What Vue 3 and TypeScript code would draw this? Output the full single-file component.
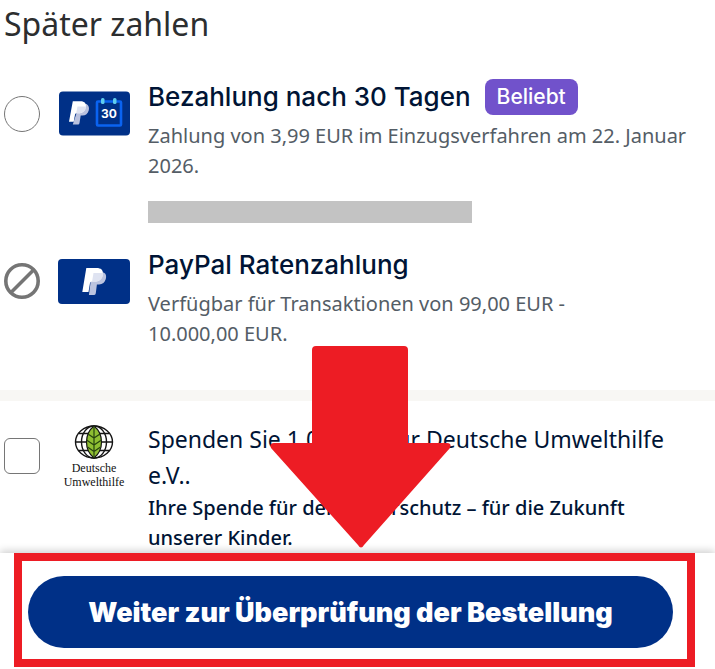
<script setup lang="ts">
import { ref } from 'vue'

const payLater = ref<string | null>(null)
const donate = ref(false)
</script>

<template>
  <main class="checkout">
    <form class="form" @submit.prevent>
      <section class="later">
        <h1 class="heading">Später zahlen</h1>

        <div class="option">
          <input id="pay30" v-model="payLater" class="radio" type="radio" name="later" value="pay30" />
          <svg class="card" viewBox="0 0 72 45" aria-hidden="true">
            <rect x="1" y="0.5" width="71" height="44" rx="4" fill="#003087" />
            <path d="M21.500 13h7c2.300 1.400 2.900 3.700 2.300 6.200-.9 3.600-3.200 5.300-6.300 5.300h-1.800l-1.200 7.500q-.2 1.600-1.500 1.600h-5.200z" fill="#b9c1de" />
            <path d="M14.800 10.300h7.700c4.200 0 6 2.200 5.300 6-.8 4-3.500 6-7.500 6h-1.500q-1.500 0-1.800 1.400l-1.300 7H11z" fill="#fff" />
            <path d="M19.500 15.500h8.400c0 4.500-3 6.800-7.600 6.800h-2.100z" fill="#dfe3f1" />
            <rect x="39" y="10.500" width="24" height="24" rx="1" fill="none" stroke="#0a63f1" stroke-width="2.600" />
            <rect x="43" y="7" width="3.500" height="6" rx="1.500" fill="#60cdee" />
            <rect x="55" y="7" width="3.500" height="6" rx="1.500" fill="#60cdee" />
            <text x="51" y="27" class="day" text-anchor="middle">30</text>
          </svg>
          <div class="copy">
            <div class="title-row">
              <label class="title" for="pay30">Bezahlung nach 30 Tagen</label>
              <span class="badge">Beliebt</span>
            </div>
            <p class="detail">Zahlung von 3,99 EUR im Einzugsverfahren am 22. Januar 2026.</p>
            <div class="redacted"></div>
          </div>
        </div>

        <div class="option">
          <span class="blocked">
            <input id="rates" v-model="payLater" class="blocked-input" type="radio" name="later" value="rates" disabled />
            <svg class="blocked-icon" viewBox="0 0 36 36" aria-hidden="true">
              <circle cx="18" cy="18" r="16.200" fill="none" stroke="#757575" stroke-width="3.600" />
              <path d="M7 29.500 29 7.500" stroke="#757575" stroke-width="3.600" />
            </svg>
          </span>
          <svg class="card" viewBox="0 0 72 45" aria-hidden="true">
            <rect width="72" height="45" rx="4" fill="#003087" />
            <path d="M45.500 13.500c2.600 1.200 3.100 3.600 2.300 6.600-.9 3.600-3.300 5.300-6.700 5.300h-2.200l-1.100 8.800q-.2 1.800-1.600 1.800h-5.300l3-22.500z" fill="#bcc4df" />
            <path d="M28.300 9h10.200c4.500 0 7 2 6.300 6.400-.8 5.100-4 7.200-8.400 7.200h-2.500q-1.600 0-1.900 1.500l-1.500 8.900h-6.200z" fill="#fff" />
            <path d="M35.500 14h9.500c.2 5.500-3 8.600-8.600 8.600h-2.300z" fill="#dfe3f1" />
          </svg>
          <div class="copy">
            <div class="title-row">
              <label class="title" for="rates">PayPal Ratenzahlung</label>
            </div>
            <p class="detail">Verfügbar für Transaktionen von 99,00 EUR - 10.000,00&nbsp;EUR.</p>
          </div>
        </div>
      </section>

      <section class="donation">
        <div class="option">
          <input id="donate" v-model="donate" class="check" type="checkbox" />
          <div class="charity">
            <svg class="globe" viewBox="0 0 40 34" aria-hidden="true">
              <g fill="none" stroke="#151515" stroke-width="1.400">
                <ellipse cx="20" cy="17" rx="18.500" ry="16" />
                <ellipse cx="20" cy="17" rx="12.500" ry="16" />
                <path d="M4.500 8.500h31M1.500 17h37M4.500 25.500h31" />
              </g>
              <path d="M20 1C10 9 10 25 20 33C30 25 30 9 20 1Z" fill="#8fbf32" stroke="#151515" stroke-width="1.200" />
              <path d="M20 1v32M14 9l6 4 6-4M12.500 15l7.500 5 7.500-5M13.500 22l6.500 4.500 6.500-4.500" fill="none" stroke="#26430f" stroke-width="1.200" />
            </svg>
            <span>Deutsche</span>
            <span>Umwelthilfe</span>
          </div>
          <div class="copy">
            <label class="donation-title" for="donate">Spenden Sie 1,00 EUR für Deutsche Umwelthilfe e.V..</label>
            <p class="donation-detail">Ihre Spende für den Naturschutz – für die Zukunft unserer Kinder.</p>
          </div>
        </div>
      </section>

      <footer class="footer">
        <div class="highlight">
          <button class="submit" type="submit">Weiter zur Überprüfung der Bestellung</button>
        </div>
        <svg class="arrow" viewBox="0 0 182 202" aria-hidden="true">
          <path d="M46 0h88q4 0 4 4v93h39q5 0 3 5L94 199q-3 5-6 0L1 102q-2-5 3-5h38V4q0-4 4-4z" fill="#ed1c24" />
        </svg>
      </footer>
    </form>
  </main>
</template>

<style>
body {
  margin: 0;
  background: #fff;
}
</style>

<style scoped>
.checkout {
  font-family: "Noto Sans", sans-serif;
  color: #001435;
  overflow: hidden;
}
.form {
  display: flex;
  flex-direction: column;
}
.later {
  padding: 4px 0 41px;
}
.heading {
  margin: 0 0 35px;
  padding-left: 4px;
  font-size: 32px;
  line-height: 40px;
  font-weight: 400;
  color: #2c2e2f;
}
.option {
  display: grid;
  grid-template-columns: 36px 72px 1fr;
  column-gap: 18px;
  padding: 0 18px 0 4px;
}
.option + .option {
  margin-top: 24px;
}
.copy {
  min-width: 0;
}
.title-row {
  display: flex;
  align-items: center;
  gap: 14px;
  height: 36px;
}
.title {
  font-family: Inter, sans-serif;
  font-size: 26px;
  line-height: 36px;
  font-weight: 500;
}
.badge {
  padding: 0 12px;
  border-radius: 8px;
  background: #7152cb;
  color: #fff;
  font-family: Inter, sans-serif;
  font-size: 21px;
  line-height: 36px;
  font-weight: 500;
}
.detail {
  margin: 6px 0 0;
  font-size: 20px;
  line-height: 30px;
  color: #545d66;
}
.redacted {
  max-width: 324px;
  height: 22px;
  margin-top: 20px;
  background: #c3c3c3;
}
.radio,
.check {
  appearance: none;
  box-sizing: border-box;
  width: 36px;
  height: 36px;
  margin: 17px 0 0;
  border: 1px solid #767676;
  background: #fff;
}
.radio {
  border-radius: 50%;
}
.radio:checked {
  border: 10px solid #003087;
}
.check {
  border-radius: 6px;
}
.check:checked {
  background: #003087;
}
.card {
  width: 72px;
  height: 45px;
  margin-top: 12px;
}
.day {
  font-family: Inter, sans-serif;
  font-size: 12px;
  font-weight: 700;
  fill: #fff;
}
.blocked {
  display: grid;
  height: 36px;
  margin-top: 16px;
}
.blocked-input,
.blocked-icon {
  grid-area: 1 / 1;
  width: 36px;
  height: 36px;
  margin: 0;
}
.blocked-input {
  appearance: none;
}
.donation {
  border-top: 11px solid #f8f7f4;
  padding-top: 20px;
}
.charity {
  display: flex;
  flex-direction: column;
  align-items: center;
  padding-top: 4px;
  font-family: "Liberation Serif", serif;
  font-size: 12px;
  line-height: 14px;
  color: #111;
}
.globe {
  width: 40px;
  height: 34px;
  margin-bottom: 2px;
}
.donation-title {
  display: block;
  font-size: 23px;
  line-height: 36px;
}
.donation-detail {
  margin: 0;
  font-size: 20px;
  line-height: 30px;
  font-weight: 500;
}
.footer {
  position: relative;
  padding: 0 20px 2px 14px;
  background: #fff;
  box-shadow: 0 -2px 8px rgba(0, 0, 0, 0.2);
}
.highlight {
  border: 8px solid #ed1c24;
  padding: 15px 14px 11px 6px;
}
.submit {
  display: block;
  width: 100%;
  height: 72px;
  padding: 0;
  border: 0;
  border-radius: 36px;
  background: #003087;
  color: #fff;
  font-family: Inter, sans-serif;
  font-size: 27px;
  font-weight: 900;
  cursor: pointer;
}
.arrow {
  position: absolute;
  left: calc(50% - 88px);
  bottom: 121px;
  width: 182px;
  height: 202px;
  pointer-events: none;
}
</style>
